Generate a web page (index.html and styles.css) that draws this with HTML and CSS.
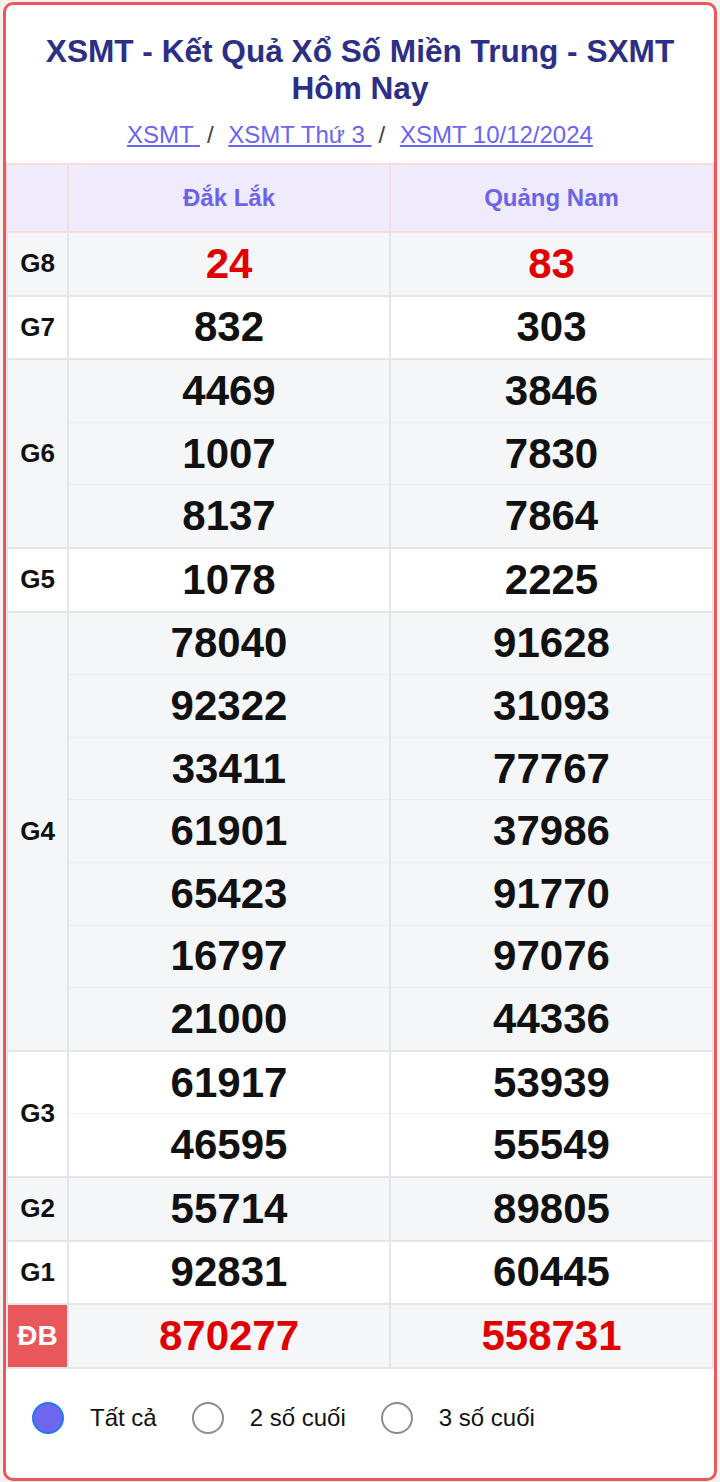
FILE: index.html
```html
<!DOCTYPE html>
<html lang="vi">
<head>
<meta charset="utf-8">
<title>XSMT - Kết Quả Xổ Số Miền Trung</title>
<link rel="stylesheet" href="styles.css">
</head>
<body>
<div class="card">
  <h1 class="title">XSMT - Kết Quả Xổ Số Miền Trung - SXMT Hôm Nay</h1>
  <nav class="crumbs">
    <a href="#">XSMT<span class="tail"> </span></a><span class="sep">/</span>
    <a href="#">XSMT Thứ 3<span class="tail"> </span></a><span class="sep">/</span>
    <a href="#">XSMT 10/12/2024</a>
  </nav>
  <table class="results">
    <colgroup><col class="c-lbl"><col class="c-a"><col class="c-b"></colgroup>
    <thead>
      <tr><th class="lbl"></th><th>Đắk Lắk</th><th>Quảng Nam</th></tr>
    </thead>
    <tbody class="gray">
      <tr><td class="lbl">G8</td><td class="num red">24</td><td class="num red">83</td></tr>
    </tbody>
    <tbody class="white">
      <tr><td class="lbl">G7</td><td class="num">832</td><td class="num">303</td></tr>
    </tbody>
    <tbody class="gray">
      <tr><td class="lbl" rowspan="3">G6</td><td class="num">4469</td><td class="num">3846</td></tr>
      <tr><td class="num">1007</td><td class="num">7830</td></tr>
      <tr><td class="num">8137</td><td class="num">7864</td></tr>
    </tbody>
    <tbody class="white">
      <tr><td class="lbl">G5</td><td class="num">1078</td><td class="num">2225</td></tr>
    </tbody>
    <tbody class="gray">
      <tr><td class="lbl" rowspan="7">G4</td><td class="num">78040</td><td class="num">91628</td></tr>
      <tr><td class="num">92322</td><td class="num">31093</td></tr>
      <tr><td class="num">33411</td><td class="num">77767</td></tr>
      <tr><td class="num">61901</td><td class="num">37986</td></tr>
      <tr><td class="num">65423</td><td class="num">91770</td></tr>
      <tr><td class="num">16797</td><td class="num">97076</td></tr>
      <tr><td class="num">21000</td><td class="num">44336</td></tr>
    </tbody>
    <tbody class="white">
      <tr><td class="lbl" rowspan="2">G3</td><td class="num">61917</td><td class="num">53939</td></tr>
      <tr><td class="num">46595</td><td class="num">55549</td></tr>
    </tbody>
    <tbody class="gray">
      <tr><td class="lbl">G2</td><td class="num">55714</td><td class="num">89805</td></tr>
    </tbody>
    <tbody class="white">
      <tr><td class="lbl">G1</td><td class="num">92831</td><td class="num">60445</td></tr>
    </tbody>
    <tbody class="gray">
      <tr><td class="lbl db">ĐB</td><td class="num red">870277</td><td class="num red">558731</td></tr>
    </tbody>
  </table>
  <div class="filters">
    <label class="opt"><span class="radio checked"></span><span class="opt-text">Tất cả</span></label>
    <label class="opt"><span class="radio"></span><span class="opt-text">2 số cuối</span></label>
    <label class="opt"><span class="radio"></span><span class="opt-text">3 số cuối</span></label>
  </div>
</div>
</body>
</html>
```

FILE: styles.css
```css
html, body {
  margin: 0;
  padding: 0;
}
body {
  background: #f6f3ee;
  font-family: "Liberation Sans", Arial, sans-serif;
  padding: 2px 3px 4px;
}
.card {
  background: #ffffff;
  border: 3px solid #e9595c;
  border-radius: 10px;
  overflow: hidden;
}
.title {
  margin: 0;
  padding: 28px 16px 0;
  font-size: 31.6px;
  line-height: 37px;
  font-weight: bold;
  text-align: center;
  color: #2c2f85;
}
.crumbs {
  margin: 14px 0 14px;
  text-align: center;
  font-size: 24px;
  line-height: 28px;
  color: #444;
}
.crumbs a {
  color: #6b63f2;
  text-decoration: underline;
}
.crumbs .tail {
  color: #222;
}
.crumbs .sep {
  margin: 0 8px 0 7px;
  color: #444;
}
.results {
  width: 706px;
  margin: 0 auto;
  border-collapse: collapse;
  table-layout: fixed;
}
.c-lbl { width: 61px; }
.c-a { width: 322px; }
.c-b { width: 323px; }
.results th {
  background: #efebfd;
  border: 2px solid #f6dcdc;
  height: 66px;
  padding: 0;
  font-size: 24px;
  font-weight: bold;
  color: #6c64e6;
  text-align: center;
}
.results tbody {
  border-top: 2px solid #e3e5eb;
}
.results tbody:last-child {
  border-bottom: 2px solid #e3e5eb;
}
.results td {
  padding: 0;
  height: 61.6px;
  text-align: center;
  border-left: 2px solid #e3e5eb;
  border-right: 2px solid #e3e5eb;
}
.results tbody tr + tr td.num {
  border-top: 1px solid #eceef2;
}
.gray td { background: #f5f6f8; }
.white td { background: #ffffff; }
.lbl {
  font-size: 26px;
  font-weight: bold;
  color: #111;
}
.results td.db {
  background: #e8585b;
  color: #ffffff;
  font-size: 28px;
}
.num {
  font-size: 42px;
  font-weight: bold;
  color: #111;
  line-height: 1;
}
.num.red {
  color: #e10000;
}
.filters {
  display: flex;
  align-items: center;
  padding: 33px 0 44px 26px;
}
.opt {
  display: flex;
  align-items: center;
  margin-right: 35px;
}
.radio {
  box-sizing: border-box;
  width: 32px;
  height: 32px;
  border-radius: 50%;
  border: 2px solid #8c8c8c;
  background: #fff;
  margin-right: 26px;
}
.radio.checked {
  border: 2px solid #1b7cf3;
  background: #6f65ee;
}
.opt-text {
  font-size: 24px;
  color: #111;
}
```
